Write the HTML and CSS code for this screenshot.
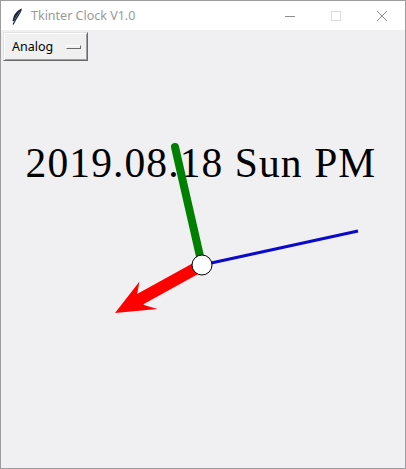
FILE: index.html
```html
<!DOCTYPE html>
<html>
<head>
    <meta charset="UTF-8">
    <title>Tkinter Clock V1.0</title>
    <link rel="stylesheet" href="styles.css">
</head>
<body>
    <div class="window">
        <div class="titlebar">
            <svg class="app-icon" width="12" height="17" viewBox="0 0 12 17">
                <path d="M11 0.5 C6 2 2.5 6.5 1.5 13 L2.8 13.3 C6 10.5 9.5 6 11 0.5 Z" fill="#1c2233"/>
                <path d="M10 2 L2 16.5" stroke="#1c2233" stroke-width="1.2"/>
                <path d="M9 3.5 L3.5 11.5" stroke="#8a93a8" stroke-width="0.7"/>
            </svg>
            <span class="title">Tkinter Clock V1.0</span>
            <div class="controls">
                <span class="ctl">
                    <svg width="12" height="12" viewBox="0 0 12 12"><path d="M1 6.5 H11" stroke="#8c8c8c" stroke-width="1"/></svg>
                </span>
                <span class="ctl">
                    <svg width="12" height="12" viewBox="0 0 12 12"><rect x="1.5" y="1.5" width="9" height="9" fill="none" stroke="#dcdcdc" stroke-width="1"/></svg>
                </span>
                <span class="ctl">
                    <svg width="12" height="12" viewBox="0 0 12 12"><path d="M1 1 L11 11 M11 1 L1 11" stroke="#8c8c8c" stroke-width="1"/></svg>
                </span>
            </div>
        </div>

        <div class="client">
            <div class="toolbar">
                <button class="menubutton">Analog<span class="indicator"></span></button>
            </div>

            <!-- canvas: text + hands, drawn in window coordinates -->
            <svg class="canvas" width="404" height="405" viewBox="0 0 404 405">
                <g transform="translate(-1,-63)">
                    <text class="date" x="201" y="177" text-anchor="middle">2019.08.18 Sun PM</text>
                    <line x1="175" y1="147" x2="202" y2="265" stroke="#008000" stroke-width="8" stroke-linecap="round"/>
                    <line x1="202" y1="265" x2="358" y2="231" stroke="#0a0ac8" stroke-width="3"/>
                    <line x1="202" y1="265" x2="135" y2="302" stroke="#ff0000" stroke-width="12"/>
                    <polygon points="115,313 139.5,281.5 137,294.5 144,305 157.5,309" fill="#ff0000"/>
                    <circle cx="202" cy="265" r="10" fill="#ffffff" stroke="#000000" stroke-width="1"/>
                </g>
            </svg>
        </div>
    </div>
</body>
</html>
```

FILE: styles.css
```css
html, body {
    margin: 0;
    padding: 0;
    background: #f0f0f0;
}

.window {
    width: 406px;
    height: 469px;
    box-sizing: border-box;
    border: 1px solid #9c9c9c;
    display: flex;
    flex-direction: column;
    background: #f0eff1;
}

.titlebar {
    height: 29px;
    background: #ffffff;
    display: flex;
    align-items: center;
    flex-shrink: 0;
}

.app-icon {
    margin-left: 10px;
    margin-top: 1px;
}

.title {
    margin-left: 8px;
    font-family: "Noto Sans", "Open Sans", sans-serif;
    font-size: 12.5px;
    color: #9a9a9a;
}

.controls {
    margin-left: auto;
    display: flex;
    height: 100%;
}

.ctl {
    width: 46px;
    display: flex;
    align-items: center;
    justify-content: center;
}

.client {
    flex: 1;
    display: flex;
    flex-direction: column;
}

.toolbar {
    padding: 2px 2px;
    display: flex;
}

.menubutton {
    width: 85px;
    height: 29px;
    box-sizing: border-box;
    margin: 0;
    padding: 0 0 0 8px;
    display: flex;
    align-items: center;
    font-family: "Noto Sans", "Open Sans", sans-serif;
    font-size: 12.5px;
    color: #000000;
    background: #f0f0f0;
    border: 1px solid;
    border-color: #e3e3e3 #696969 #696969 #e3e3e3;
    box-shadow: inset 1px 1px 0 #ffffff, inset -1px -1px 0 #a0a0a0;
}

.indicator {
    width: 15px;
    height: 4px;
    box-sizing: border-box;
    margin-left: auto;
    margin-right: 6px;
    margin-top: 1px;
    border: 1px solid;
    border-color: #ffffff #696969 #696969 #ffffff;
    background: #f0f0f0;
}

.canvas {
    display: block;
}

.date {
    font-family: "Liberation Serif", "Times New Roman", serif;
    font-size: 41.5px;
    letter-spacing: 1.1px;
    fill: #000000;
}
```
